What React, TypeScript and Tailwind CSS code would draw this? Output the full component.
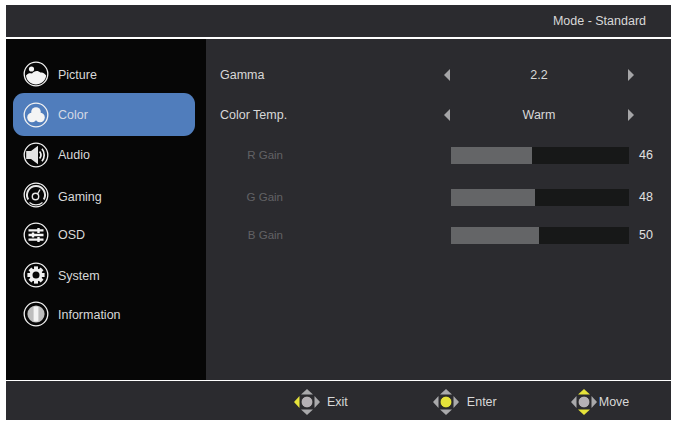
import React from "react";

const Ring = ({ children, cls }: { children: React.ReactNode; cls?: string }) => (
  <svg width="26" height="26" viewBox="0 0 26 26" className={`shrink-0 ${cls ?? ""}`}>
    <circle cx="13" cy="13" r="11.8" fill="none" stroke="#f2f2f2" strokeWidth="1.3" />
    {children}
  </svg>
);

type IconProps = { cls?: string };

const PictureIcon = ({ cls }: IconProps) => (
  <Ring cls={cls}>
    <circle cx="8.5" cy="8" r="2.6" fill="#f4f4f4" />
    <path d="M3 14.5C5 12 7 12 9 12.5C11 9.5 15 9 17.5 11.5C20 11 22 12.5 23.2 14.5C22.5 20 18 23.4 13 23.4C8 23.4 3.6 20 3 14.5Z" fill="#f4f4f4" />
  </Ring>
);
const ColorIcon = ({ cls }: IconProps) => (
  <Ring cls={cls}>
    <circle cx="13" cy="10" r="4.8" fill="#f4f4f4" />
    <circle cx="9" cy="15.5" r="4.8" fill="#f4f4f4" />
    <circle cx="17" cy="15.5" r="4.8" fill="#f4f4f4" />
  </Ring>
);
const AudioIcon = ({ cls }: IconProps) => (
  <Ring cls={cls}>
    <path d="M3.2 9H8L15 3.8V22.2L8 17H3.2Z" fill="#e4e4e4" />
    <path d="M16.6 9.5C18.2 11.5 18.2 14.5 16.6 16.5" fill="none" stroke="#f0f0f0" strokeWidth="1.7" />
    <path d="M19 6.8C21.9 10.3 21.9 15.7 19 19.2" fill="none" stroke="#f0f0f0" strokeWidth="1.7" />
  </Ring>
);
const GamingIcon = ({ cls }: IconProps) => (
  <Ring cls={cls}>
    <path d="M5.2 17.5A9 9 0 1 1 20.8 17.5" fill="none" stroke="#e8e8e8" strokeWidth="2" />
    <path d="M6.5 20.5A10 10 0 0 0 19.5 20.5" fill="none" stroke="#e8e8e8" strokeWidth="1.2" />
    <circle cx="12.5" cy="14.5" r="3.2" fill="none" stroke="#e8e8e8" strokeWidth="1.4" />
    <path d="M14.5 12L17 7.5" stroke="#e8e8e8" strokeWidth="1.4" />
  </Ring>
);
const OsdIcon = ({ cls }: IconProps) => (
  <Ring cls={cls}>
    <path d="M5.5 8.4H20.5M5.5 13H20.5M5.5 17.6H20.5" stroke="#f4f4f4" strokeWidth="2.4" />
    <path d="M15.5 6V11M10 10.5V15.5M15.5 15V20" stroke="#f4f4f4" strokeWidth="2.4" />
  </Ring>
);
const SystemIcon = ({ cls }: IconProps) => (
  <Ring cls={cls}>
    <g fill="#f0f0f0">
      {[0, 45, 90, 135, 180, 225, 270, 315].map((a) => (
        <rect key={a} x="11" y="4.4" width="4" height="4" transform={`rotate(${a} 13 13)`} />
      ))}
    </g>
    <circle cx="13" cy="13" r="5" fill="none" stroke="#f0f0f0" strokeWidth="3" />
  </Ring>
);
const InfoIcon = ({ cls }: IconProps) => (
  <Ring cls={cls}>
    <circle cx="13" cy="13" r="8.6" fill="#bdbdbd" />
    <rect x="10.6" y="5.5" width="4.8" height="15" rx="1" fill="#f2f2f2" />
  </Ring>
);

const items = [
  { label: "Picture", Icon: PictureIcon, cls: "h-9", iconCls: "-mt-[3px]", textCls: "" },
  { label: "Color", Icon: ColorIcon, cls: "h-[43px] rounded-[11px] bg-[#507dbc] text-[#d4d9e4]", iconCls: "", textCls: "mt-[2px]" },
  { label: "Audio", Icon: AudioIcon, cls: "h-9 mt-px", iconCls: "", textCls: "" },
  { label: "Gaming", Icon: GamingIcon, cls: "h-9 mt-[6px]", iconCls: "-mt-[4px]", textCls: "" },
  { label: "OSD", Icon: OsdIcon, cls: "h-9 mt-[2px]", iconCls: "", textCls: "" },
  { label: "System", Icon: SystemIcon, cls: "h-9 mt-[5px]", iconCls: "-mt-[3px]", textCls: "" },
  { label: "Information", Icon: InfoIcon, cls: "h-9 mt-[3px]", iconCls: "-mt-[2px]", textCls: "" },
];

const Tri = ({ dir }: { dir: "l" | "r" }) => (
  <svg width="6" height="12" viewBox="0 0 6 12" className="shrink-0">
    <path d={dir === "l" ? "M6 0V12L0 6Z" : "M0 0V12L6 6Z"} fill="#a5a5a7" />
  </svg>
);

const Choice = ({ label, value, cls }: { label: string; value: string; cls: string }) => (
  <div className={`flex h-9 items-center ${cls}`}>
    <span className="w-[238px] pl-[14px] text-[#d8d8d8]">{label}</span>
    <div className="flex w-[190px] items-center justify-between">
      <Tri dir="l" />
      <span className="text-[#d8d8d8]">{value}</span>
      <Tri dir="r" />
    </div>
  </div>
);

const Gain = ({ label, value, fill, cls }: { label: string; value: number; fill: string; cls: string }) => (
  <div className={`flex h-[17px] items-center ${cls}`}>
    <span className="w-[77px] text-right text-[11.5px] text-[#626265]">{label}</span>
    <div className="ml-[168px] h-[17px] w-[178px] bg-[#171818]">
      <div className={`h-full bg-[#646567] ${fill}`} />
    </div>
    <span className="ml-[10px] text-[#e0e0e0]">{value}</span>
  </div>
);

const Pad = ({ l, r, u, d, c }: { l: string; r: string; u: string; d: string; c: string }) => (
  <svg width="28" height="28" viewBox="0 0 28 28" className="shrink-0">
    <path d="M14 1L20 6.5H8Z" fill={u} />
    <path d="M14 27L20 21.5H8Z" fill={d} />
    <path d="M1 14L6.5 8V20Z" fill={l} />
    <path d="M27 14L21.5 8V20Z" fill={r} />
    <circle cx="14" cy="14" r="5.8" fill={c} stroke="#1c1c1c" strokeWidth="0.6" />
  </svg>
);

const G = "#a9a9ab";
const Y = "#e6e33a";

export default function App() {
  return (
    <div className="h-[427px] w-[686px] bg-white pl-[6px] pt-[5px] text-[12.5px] font-['Liberation_Sans',Arial,sans-serif]">
      <div className="flex h-[415px] w-[665px] flex-col bg-[#2b2b2f]">
        <div className="flex h-8 shrink-0 items-center justify-end pr-[25px] text-[#d8d8d8]">Mode - Standard</div>
        <div className="h-[2px] shrink-0 bg-white" />
        <div className="flex h-[341px] shrink-0">
          <div className="flex w-[200px] shrink-0 flex-col bg-[#060606] pl-[7px] pr-[11px] pt-[18px] text-[#d8d8d8]">
            {items.map(({ label, Icon, cls, iconCls, textCls }) => (
              <div key={label} className={`flex items-center gap-[9px] pl-[10px] ${cls}`}>
                <Icon cls={iconCls} />
                <span className={textCls}>{label}</span>
              </div>
            ))}
          </div>
          <div className="flex-1 pt-[18px]">
            <Choice label="Gamma" value="2.2" cls="" />
            <Choice label="Color Temp." value="Warm" cls="mt-1" />
            <Gain label="R Gain" value={46} fill="w-[81px]" cls="mt-[14px]" />
            <Gain label="G Gain" value={48} fill="w-[84px]" cls="mt-[25px]" />
            <Gain label="B Gain" value={50} fill="w-[88px]" cls="mt-[21px]" />
          </div>
        </div>
        <div className="h-px shrink-0 bg-white" />
        <div className="flex flex-1 items-center pl-[287px] pt-[3px] text-[#d8d8d8]">
          <Pad l={Y} r={G} u={G} d={G} c="#b5b1b5" />
          <span className="ml-[6px]">Exit</span>
          <div className="ml-[84px]"><Pad l={G} r={G} u={G} d={G} c={Y} /></div>
          <span className="ml-[7px]">Enter</span>
          <div className="ml-[73px]"><Pad l={G} r={G} u={Y} d={Y} c="#b5b1b5" /></div>
          <span className="ml-[1px]">Move</span>
        </div>
      </div>
    </div>
  );
}
